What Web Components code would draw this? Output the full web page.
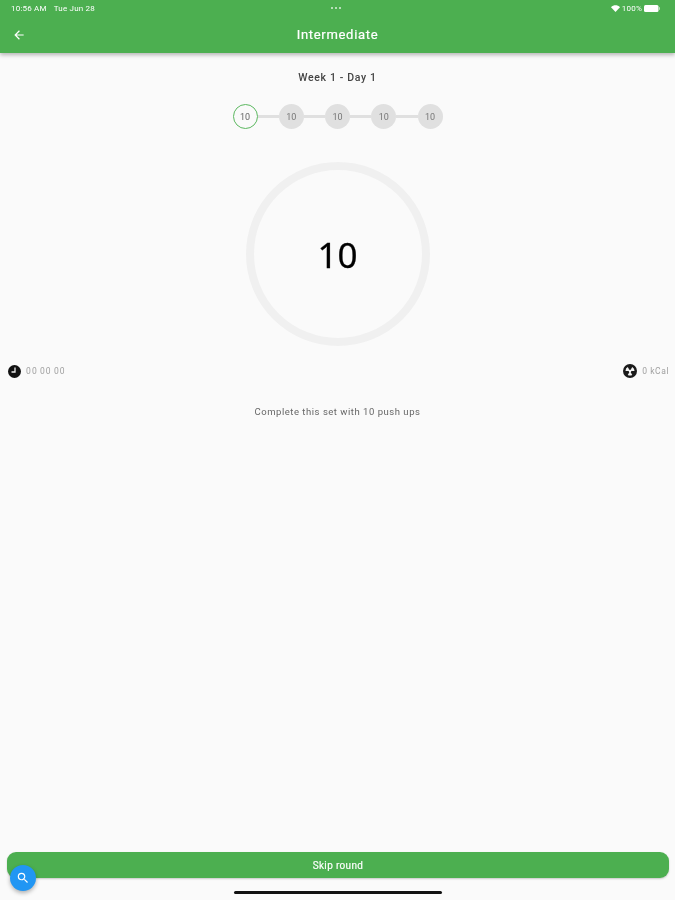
<!DOCTYPE html>
<html lang="en"><head><meta charset="utf-8"><title>Intermediate</title>
<style>
html,body{margin:0;padding:0;background:#fafafa}
body{font-family:Roboto,"Liberation Sans",sans-serif;width:675px;height:900px;overflow:hidden}
</style></head><body>
<workout-app></workout-app>
<script>
function def(name, html){
  customElements.define(name, class extends HTMLElement{
    constructor(){super();this.attachShadow({mode:'open'}).innerHTML=html;}
  });
}
def('status-bar',`<style>
:host{display:flex;align-items:center;height:16px;padding:0 15px 0 11px;color:#fff;font-size:8px;letter-spacing:.2px;filter:blur(.45px);flex:none}
.l{display:flex;gap:7px;flex:1}
.dots{display:flex;gap:2px;justify-content:center;flex:none}
.dots i{width:2px;height:2px;border-radius:50%;background:#fff;opacity:.8}
.r{display:flex;gap:2px;flex:1;justify-content:flex-end;align-items:center}
svg{display:block}
</style>
<div class="l"><span>10:56 AM</span><span>Tue Jun 28</span></div>
<div class="dots"><i></i><i></i><i></i></div>
<div class="r"><svg width="9" height="7" viewBox="0 0 9 7"><path d="M0 2.2C2.500-.3 6.500-.3 9 2.200L4.500 7z" fill="#fff"/></svg><span>100%</span><svg width="16" height="7" viewBox="0 0 16 7"><rect width="14.500" height="7" rx="1.500" fill="#fff"/><rect x="15" y="2.200" width="1" height="2.600" fill="#fff" opacity=".6"/></svg></div>`);
def('app-bar',`<style>
:host{display:block;background:#4caf50;box-shadow:0 2px 4px rgba(0,0,0,.28);position:relative;z-index:1;flex:none;height:53px}
.row{display:grid;grid-template-columns:38px 1fr 38px;align-items:center;height:37px;color:#fff}
svg{display:block;margin-left:12px}
h1{margin:0;font-size:13px;font-weight:400;text-align:center;letter-spacing:.7px;filter:blur(.45px);-webkit-text-stroke:.2px #fff}
</style>
<status-bar></status-bar>
<div class="row"><svg width="14" height="14" viewBox="0 0 24 24"><path d="M20 11H7.830l5.590-5.590L12 4l-8 8 8 8 1.410-1.410L7.830 13H20z" fill="#fff"/></svg><h1><slot></slot></h1><span></span></div>`);
def('step-dot',`<style>
:host{display:flex;width:25px;height:25px;box-sizing:border-box;border-radius:50%;background:#e0e0e0;color:#777;font-size:9px;align-items:center;justify-content:center;flex:none}
:host([active]){background:#fafafa;border:1.500px solid #5cb860;color:#666}
span{filter:blur(.45px)}
</style><span><slot></slot></span>`);
def('step-row',`<style>
:host{display:flex;align-items:center;justify-content:center}
::slotted(i){display:block;width:21.250px;height:3px;background:#e0e0e0;flex:none}
</style><slot></slot>`);
def('count-ring',`<style>
:host{display:flex;width:184px;height:184px;box-sizing:border-box;border:8px solid #f0f0f0;border-radius:50%;align-items:center;justify-content:center;font-size:35px;color:#000;font-family:"Noto Sans","Open Sans",sans-serif}
span{filter:blur(.3px);-webkit-text-stroke:.3px #000}
</style><span><slot></slot></span>`);
def('stat-item',`<style>
:host{display:flex;align-items:center;gap:5px;font-size:8.500px;color:#a0a0a0;letter-spacing:.55px}
:host([wide]){letter-spacing:1.100px;word-spacing:-1px}
span{filter:blur(.5px)}
svg{display:block}
</style><slot name="icon"></slot><span><slot></slot></span>`);
def('skip-button',`<style>
:host{display:flex;height:26px;margin:0 6px 0 7px;background:#4caf50;border-radius:9px;color:#fff;font-size:10px;font-weight:400;letter-spacing:.35px;align-items:center;justify-content:center;box-shadow:0 1px 2px rgba(0,0,0,.2)}
span{filter:blur(.45px);-webkit-text-stroke:.15px #fff}
</style><span><slot></slot></span>`);
def('search-fab',`<style>
:host{display:flex;position:absolute;left:10px;top:865px;width:26px;height:26px;border-radius:50%;background:#2196f3;align-items:center;justify-content:center;box-shadow:0 2px 4px rgba(0,0,0,.3);z-index:2}
svg{display:block}
</style><svg width="14" height="14" viewBox="0 0 24 24"><path d="M15.500 14h-.79l-.28-.27A6.470 6.470 0 0 0 16 9.500 6.500 6.500 0 1 0 9.500 16c1.610 0 3.090-.59 4.230-1.570l.27.28v.79l5 4.990L20.490 19zm-6 0C7.010 14 5 11.990 5 9.500S7.010 5 9.500 5 14 7.010 14 9.500 11.990 14 9.500 14z" fill="#fff"/></svg>`);
def('workout-app',`<style>
:host{display:flex;flex-direction:column;width:675px;height:900px;background:#fafafa;position:relative}
main{flex:1;display:flex;flex-direction:column;align-items:center;min-height:0}
.week{margin-top:18px;font-size:10.500px;line-height:14px;font-weight:500;color:#444;letter-spacing:.65px;filter:blur(.45px)}
step-row{margin-top:19px}
count-ring{margin-top:33px}
.stats{align-self:stretch;display:flex;justify-content:space-between;align-items:center;margin-top:16px;padding:0 6px 0 8px;height:18px}
.msg{margin-top:25px;font-size:9.500px;line-height:14px;color:#666;letter-spacing:.52px;filter:blur(.45px)}
.bottom{flex:none;height:48px;position:relative}
.spacer{flex:1}
.home{display:block;width:208px;height:3px;border-radius:2px;background:#111;margin:13px auto 0}
</style>
<app-bar>Intermediate</app-bar>
<main>
  <div class="week">Week 1 - Day 1</div>
  <step-row><step-dot active>10</step-dot><i></i><step-dot>10</step-dot><i></i><step-dot>10</step-dot><i></i><step-dot>10</step-dot><i></i><step-dot>10</step-dot></step-row>
  <count-ring>10</count-ring>
  <div class="stats">
    <stat-item wide><svg slot="icon" width="13" height="13" viewBox="0 0 13 13"><circle cx="6.500" cy="6.500" r="6.500" fill="#111"/><path d="M7 2.500V7H3.500" fill="none" stroke="#eee" stroke-width="1.300"/></svg>00 00 00</stat-item>
    <stat-item><svg slot="icon" width="14" height="14" viewBox="0 0 14 14"><circle cx="7" cy="7" r="7" fill="#1a1a1a"/><circle cx="7" cy="7" r="1.300" fill="#fafafa"/><path d="M7 7 4.700 3.100A4.500 4.500 0 0 1 9.300 3.100zM7 7h4.500a4.500 4.500 0 0 1-2.250 3.900zM7 7H2.500a4.500 4.500 0 0 0 2.250 3.900z" fill="#f2f2f2" transform="rotate(60 7 7)"/></svg>0 kCal</stat-item>
  </div>
  <div class="msg">Complete this set with 10 push ups</div>
  <div class="spacer"></div>
</main>
<div class="bottom"><skip-button>Skip round</skip-button><b class="home"></b></div>
<search-fab></search-fab>`);
</script>
</body></html>
